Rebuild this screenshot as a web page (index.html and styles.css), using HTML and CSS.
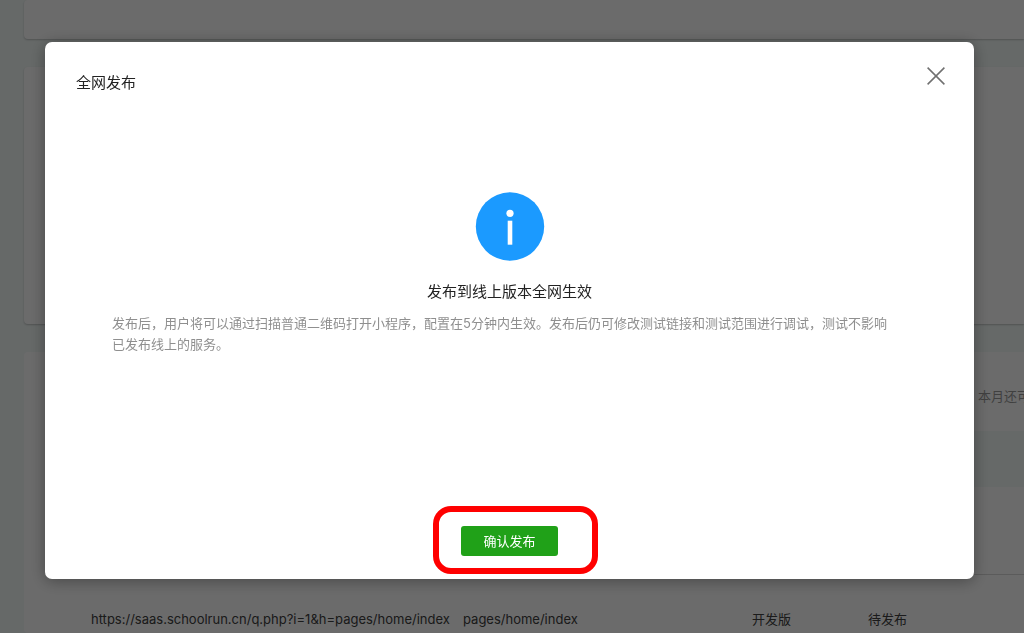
FILE: index.html
```html
<!DOCTYPE html>
<html lang="zh-CN">
<head>
  <meta charset="UTF-8">
  <meta name="viewport" content="width=device-width, initial-scale=1.0">
  <title>全网发布</title>
  <link rel="stylesheet" href="styles.css">
</head>
<body>

  <!-- Page behind the dialog -->
  <main class="page">
    <section class="card card-top"></section>
    <section class="card card-middle"></section>
    <section class="card card-rules">
      <p class="quota">本月还可</p>
      <div class="toolbar"></div>
      <div class="table-head"></div>
      <div class="table-wrap">
        <table class="rules">
          <tr>
            <td class="col-url">https://saas.schoolrun.cn/q.php?i=1&amp;h=pages/home/index</td>
            <td class="col-path">pages/home/index</td>
            <td class="col-version">开发版</td>
            <td>待发布</td>
          </tr>
        </table>
      </div>
    </section>
  </main>

  <!-- Dialog -->
  <div class="overlay">
    <div class="dialog" role="dialog" aria-labelledby="dialogTitle">
      <header class="dialog-header">
        <h1 id="dialogTitle">全网发布</h1>
        <button class="close" type="button" aria-label="关闭">
          <svg width="18" height="18" viewBox="0 0 18 18" fill="none" stroke="#707070" stroke-width="1.5">
            <path d="M.6 .6L17.4 17.4M17.4 .6L.6 17.4"/>
          </svg>
        </button>
      </header>

      <div class="dialog-body">
        <svg class="info-icon" width="70" height="70" viewBox="0 0 70 70">
          <circle cx="35" cy="34.5" r="34.2" fill="#1b9aff"/>
          <circle cx="35" cy="21.3" r="3.6" fill="#fff"/>
          <rect x="32.7" y="28.7" width="4.6" height="24" fill="#fff"/>
        </svg>
        <h2>发布到线上版本全网生效</h2>
        <p>发布后，用户将可以通过扫描普通二维码打开小程序，配置在5分钟内生效。发布后仍可修改测试链接和测试范围进行调试，测试不影响<br>已发布线上的服务。</p>
      </div>

      <footer class="dialog-footer">
        <div class="action">
          <button class="confirm" type="button">确认发布</button>
          <span class="highlight"></span>
        </div>
      </footer>
    </div>
  </div>

</body>
</html>
```

FILE: styles.css
```css
* {
  margin: 0;
  padding: 0;
  box-sizing: border-box;
}

body {
  height: 100vh;
  overflow: hidden;
  font-family: Inter, "Noto Sans CJK SC", sans-serif;
  font-size: 13px;
  color: #353535;
  background: #f3faf8;
}

.page {
  height: 100vh;
  padding-left: 24px;
  display: flex;
  flex-direction: column;
  gap: 28px;
  overflow: hidden;
}

.card {
  flex-shrink: 0;
  background: #fff;
  border-radius: 4px 0 0 4px;
  box-shadow: 0 1px 2px rgba(0, 0, 0, 0.22);
}

.card-top {
  height: 39px;
}

.card-middle {
  height: 257px;
}

.card-rules {
  flex: 1;
  box-shadow: none;
}

.quota {
  height: 79px;
  padding: 34px 0 0 954px;
  line-height: 20px;
  white-space: nowrap;
  color: #999;
}

.toolbar {
  height: 56px;
  margin-left: 40px;
  background: #f3faf8;
}

.table-head {
  height: 88px;
  margin-left: 40px;
  border-bottom: 1px solid #d8d8d8;
}

.table-wrap {
  padding: 34px 0 0 67px;
}

.rules {
  width: 100%;
  border-collapse: collapse;
  table-layout: fixed;
  line-height: 20px;
  color: #404040;
}

.rules td {
  white-space: nowrap;
}

.col-url {
  width: 372px;
}

.col-path {
  width: 289px;
}

.col-version {
  width: 116px;
}

.overlay {
  position: fixed;
  inset: 0;
  display: flex;
  padding: 42px 50px 54px 45px;
  background: rgba(0, 0, 0, 0.58);
}

.dialog {
  flex: 1;
  display: flex;
  flex-direction: column;
  background: #fff;
  border-radius: 7px;
  box-shadow: 0 2px 16px rgba(0, 0, 0, 0.35);
}

.dialog-header {
  display: flex;
  justify-content: space-between;
  padding: 24px 28px 0 31px;
}

.dialog-header h1 {
  padding-top: 6px;
  font-size: 15px;
  font-weight: 400;
  line-height: 22px;
  color: #222;
}

.close {
  width: 20px;
  height: 20px;
  border: none;
  background: none;
  cursor: pointer;
}

.close svg {
  display: block;
  margin: 1px;
}

.dialog-body {
  flex: 1;
  padding: 98px 67px 0;
}

.info-icon {
  display: block;
  margin: 0 auto 19px;
}

.dialog-body h2 {
  margin-bottom: 10px;
  font-size: 15px;
  font-weight: 400;
  line-height: 22px;
  text-align: center;
  color: #222;
}

.dialog-body p {
  line-height: 21px;
  color: #8f8f8f;
}

.dialog-footer {
  display: flex;
  justify-content: center;
  padding-bottom: 23px;
}

.action {
  position: relative;
}

.confirm {
  display: block;
  width: 97px;
  height: 30px;
  padding-bottom: 2px;
  border: none;
  border-radius: 3px;
  font-family: inherit;
  font-size: 13px;
  color: #fff;
  background: #20a118;
  cursor: pointer;
}

/* Red frame around the button */
.highlight {
  position: absolute;
  top: -20px;
  right: -40px;
  bottom: -18px;
  left: -28px;
  border: 6px solid #f00;
  border-radius: 18px;
  pointer-events: none;
}
```
